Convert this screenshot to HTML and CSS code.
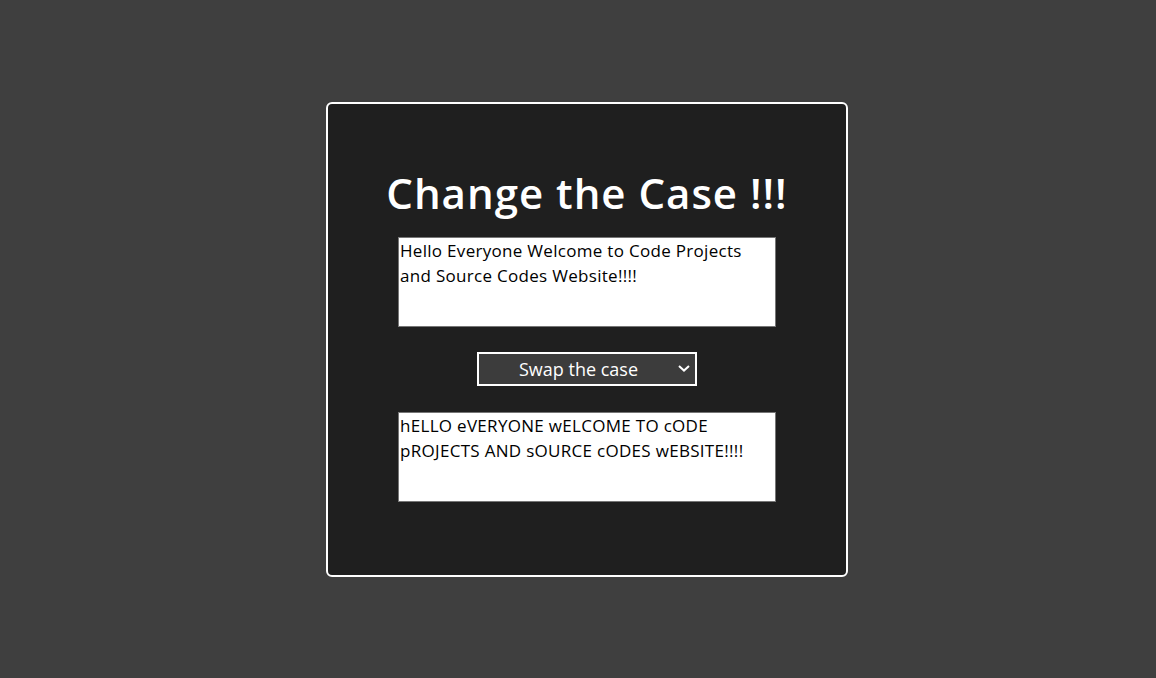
FILE: index.html
```html
<!DOCTYPE html>
<html lang="en">
<head>
<meta charset="utf-8">
<title>Change the Case</title>
<link rel="stylesheet" href="styles.css">
</head>
<body>
<main class="card">
  <h1 class="title">Change the Case !!!</h1>
  <textarea class="box">Hello Everyone Welcome to Code Projects and Source Codes Website!!!!</textarea>
  <div class="select-wrap">
    <select class="mode">
      <option>Swap the case</option>
      <option>Upper case</option>
      <option>Lower case</option>
    </select>
    <svg class="chev" width="12" height="7" viewBox="0 0 12 7"><path d="M1 1 L6 5.6 L11 1" fill="none" stroke="#fff" stroke-width="2"/></svg>
  </div>
  <textarea class="box">hELLO eVERYONE wELCOME TO cODE pROJECTS AND sOURCE cODES wEBSITE!!!!</textarea>
</main>
</body>
</html>
```
FILE: styles.css
```css
html, body {
  margin: 0;
  height: 100%;
}
body {
  background: #3f3f3f;
  display: flex;
  justify-content: center;
  align-items: center;
  font-family: "Open Sans", "DejaVu Sans", sans-serif;
}
.card {
  box-sizing: border-box;
  width: 522px;
  height: 475px;
  margin-left: 18px;
  background: #1f1f1f;
  border: 2px solid #ffffff;
  border-radius: 6px;
  display: flex;
  flex-direction: column;
  align-items: center;
  padding-top: 63px;
}
.title {
  margin: 0 0 18px 0;
  color: #ffffff;
  font-size: 42px;
  font-weight: 600;
  line-height: 52px;
  letter-spacing: 1px;
}
.box {
  box-sizing: border-box;
  width: 378px;
  height: 90px;
  margin: 0;
  padding: 0 1px;
  border: 1px solid #767676;
  background: #ffffff;
  color: #000000;
  font-family: "Open Sans", "DejaVu Sans", sans-serif;
  font-size: 17px;
  line-height: 25px;
  letter-spacing: 0.3px;
  resize: none;
  overflow: hidden;
}
.select-wrap {
  position: relative;
  margin: 25px 0 26px 0;
  width: 220px;
  height: 34px;
}
.mode {
  box-sizing: border-box;
  width: 220px;
  height: 34px;
  appearance: none;
  -webkit-appearance: none;
  background: #3c3c3c;
  color: #ffffff;
  border: 2px solid #ffffff;
  border-radius: 0;
  font-family: "Open Sans", "DejaVu Sans", sans-serif;
  font-size: 18px;
  text-align: center;
  text-align-last: center;
  padding: 0 17px 0 0;
}
.chev {
  position: absolute;
  right: 7px;
  top: 13px;
}
```
